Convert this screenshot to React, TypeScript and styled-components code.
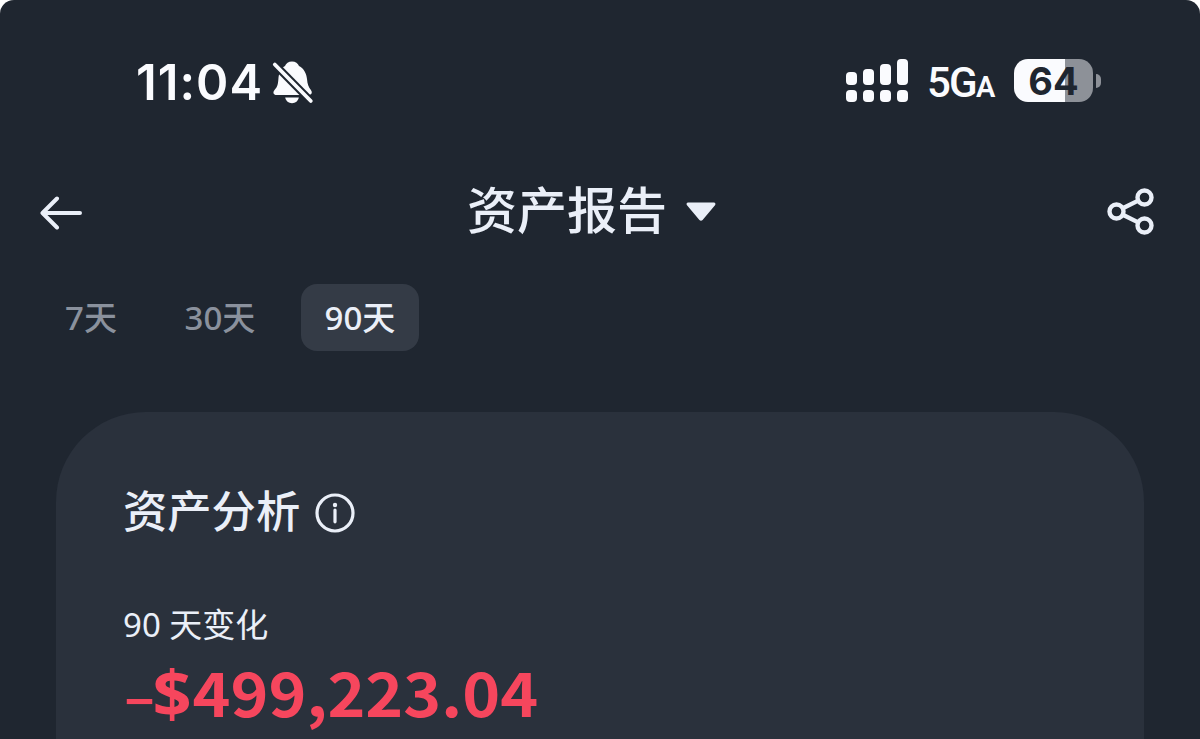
import React, { useState } from "react";
import styled, { createGlobalStyle } from "styled-components";

const colors = {
  background: "#1f2630",
  card: "#2a313c",
  tab: "#343b46",
  foreground: "#eaeff8",
  muted: "#8a919d",
  status: "#fafbfe",
  loss: "#f6465d",
};

const SIGNAL_BARS = [13, 16, 21, 26];

const TABS = [
  { label: "7天", days: 7, width: 96 },
  { label: "30天", days: 30, width: 118 },
  { label: "90天", days: 90, width: 118 },
];

export default function App() {
  const [days, setDays] = useState(90);

  return (
    <>
      <GlobalStyle />
      <Screen>
        <StatusBar>
          <StatusLeft>
            <Time>11:04</Time>
            <MutedBellIcon />
          </StatusLeft>
          <StatusRight>
            <Signal>
              {SIGNAL_BARS.map((height) => (
                <SignalColumn key={height}>
                  <SignalBar $height={height} />
                  <SignalBar $height={12} />
                </SignalColumn>
              ))}
            </Signal>
            <Network>
              5G<NetworkSuffix>A</NetworkSuffix>
            </Network>
            <Battery>
              <BatteryBody>64</BatteryBody>
              <BatteryTip />
            </Battery>
          </StatusRight>
        </StatusBar>

        <Header>
          <IconButton aria-label="返回">
            <BackIcon />
          </IconButton>
          <Title>
            <TitleText>资产报告</TitleText>
            <CaretIcon />
          </Title>
          <IconButton aria-label="分享">
            <ShareIcon />
          </IconButton>
        </Header>

        <Tabs>
          {TABS.map((tab) => (
            <Tab
              key={tab.days}
              $active={tab.days === days}
              $width={tab.width}
              onClick={() => setDays(tab.days)}
            >
              {tab.label}
            </Tab>
          ))}
        </Tabs>

        <Card>
          <CardTitle>
            <CardTitleText>资产分析</CardTitleText>
            <InfoIcon />
          </CardTitle>
          <ChangeLabel>90 天变化</ChangeLabel>
          <ChangeValue>
            <Minus>–</Minus>
            <Currency>$</Currency>499,223.04
          </ChangeValue>
        </Card>
      </Screen>
    </>
  );
}

const MutedBellIcon = () => (
  <svg width="42" height="44" viewBox="0 0 42 44" fill={colors.status}>
    <path d="M20 1.5C23.5 1.5 26 3.5 27 6C32 8.5 34.5 13.5 35 19C35.4 24 36.5 27 38.9 30C40.7 32.4 39.7 35 36.5 35H4.5C1.5 35 0.5 32.5 2.5 30C5.5 27 6 24 6.4 19C6.8 13.5 8.5 8.5 13 6C14 3.5 16.5 1.5 20 1.5Z" />
    <path d="M13.2 37.5H26.8C26.2 41 23.4 43.2 20 43.2C16.6 43.2 13.8 41 13.2 37.5Z" />
    <path d="M1 2.7L42 44.3" stroke={colors.background} strokeWidth="7.8" />
    <path
      d="M2.8 4.5L38.8 41"
      stroke={colors.status}
      strokeWidth="3.8"
      strokeLinecap="round"
    />
  </svg>
);

const BackIcon = () => (
  <svg
    width="44"
    height="36"
    viewBox="0 0 44 36"
    fill="none"
    stroke={colors.foreground}
    strokeWidth="4"
    strokeLinecap="round"
    strokeLinejoin="round"
  >
    <path d="M41 19H4M18 4.5L3.5 19L18 33.5" />
  </svg>
);

const CaretIcon = () => (
  <svg width="30" height="20" viewBox="0 0 30 20" fill={colors.foreground}>
    <path d="M2.2 0.5H27.8C29.4 0.5 30 2 29 3.2L16.6 18C15.7 19.1 14.3 19.1 13.4 18L1 3.2C0 2 0.6 0.5 2.2 0.5Z" />
  </svg>
);

const ShareIcon = () => (
  <svg
    width="48"
    height="48"
    viewBox="0 0 48 48"
    fill="none"
    stroke={colors.foreground}
    strokeWidth="4.4"
  >
    <circle cx="9.5" cy="23.5" r="7" />
    <circle cx="37.5" cy="9.5" r="7" />
    <circle cx="37.5" cy="37.5" r="7" />
    <path d="M15.8 20.3L31.2 12.6M15.8 26.7L31.2 34.4" />
  </svg>
);

const InfoIcon = () => (
  <svg
    width="40"
    height="40"
    viewBox="0 0 40 40"
    fill="none"
    stroke={colors.foreground}
    strokeWidth="3.2"
  >
    <circle cx="20" cy="20" r="18" />
    <path d="M20 17V28.8" strokeLinecap="round" />
    <circle cx="20" cy="12" r="2.2" fill={colors.foreground} stroke="none" />
  </svg>
);

const GlobalStyle = createGlobalStyle`
  body {
    margin: 0;
    background: #fff;
    font-family: "Noto Sans", "Noto Sans CJK SC", sans-serif;
    color: ${colors.foreground};
    overflow: hidden;
  }
`;

const Screen = styled.main`
  width: 1200px;
  height: 739px;
  box-sizing: border-box;
  display: flex;
  flex-direction: column;
  overflow: hidden;
  border-radius: 14px 14px 0 0;
  background: ${colors.background};
`;

const StatusBar = styled.div`
  display: flex;
  justify-content: space-between;
  align-items: center;
  height: 164px;
  flex-shrink: 0;
  box-sizing: border-box;
  padding: 0 99px 0 136px;
  color: ${colors.status};
`;

const StatusLeft = styled.div`
  display: flex;
  align-items: center;
`;

const Time = styled.span`
  width: 136px;
  padding-top: 2px;
  font-family: Inter, sans-serif;
  font-size: 49px;
  font-weight: 600;
  line-height: 60px;
  letter-spacing: 1px;
`;

const StatusRight = styled.div`
  display: flex;
  align-items: center;
`;

const Signal = styled.div`
  display: flex;
  align-items: flex-end;
  gap: 6px;
  height: 43px;
  margin-bottom: 3px;
`;

const SignalColumn = styled.div`
  display: flex;
  flex-direction: column;
  gap: 5px;
`;

const SignalBar = styled.div<{ $height: number }>`
  width: 11px;
  height: ${(props) => props.$height}px;
  border-radius: 4px;
  background: ${colors.status};
`;

const Network = styled.span`
  width: 68px;
  margin: 6px 0 0 19px;
  font-family: Roboto, sans-serif;
  font-size: 42px;
  font-weight: 500;
  line-height: 50px;
  letter-spacing: -1.8px;
  white-space: nowrap;
`;

const NetworkSuffix = styled.span`
  font-size: 29px;
  font-weight: 600;
`;

const Battery = styled.div`
  display: flex;
  align-items: center;
  gap: 3px;
  margin: -3px 0 0 19px;
`;

const BatteryBody = styled.div`
  width: 79px;
  height: 43px;
  border-radius: 14px;
  background: linear-gradient(to right, ${colors.status} 64%, #8d9198 64%);
  color: ${colors.background};
  font-family: Inter, sans-serif;
  font-size: 38px;
  font-weight: 700;
  line-height: 44px;
  text-align: center;
`;

const BatteryTip = styled.div`
  width: 5px;
  height: 14px;
  border-radius: 0 7px 7px 0;
  background: #8d9198;
`;

const Header = styled.header`
  display: flex;
  justify-content: space-between;
  align-items: center;
  height: 96px;
  flex-shrink: 0;
  padding: 0 45px 0 39px;
`;

const IconButton = styled.button`
  display: flex;
  padding: 0;
  border: none;
  background: none;
`;

const Title = styled.h1`
  display: flex;
  align-items: center;
  gap: 19px;
  margin: 0 7px 0 0;
  font-size: 50px;
  font-weight: 500;
  line-height: 70px;
`;

const TitleText = styled.span`
  padding-bottom: 4px;
`;

const Tabs = styled.nav`
  display: flex;
  gap: 22px;
  margin-top: 24px;
  padding-left: 43px;
`;

const Tab = styled.button<{ $active: boolean; $width: number }>`
  width: ${(props) => props.$width}px;
  height: 67px;
  padding: 0;
  border: none;
  border-radius: 16px;
  background: ${(props) => (props.$active ? colors.tab : "transparent")};
  color: ${(props) => (props.$active ? colors.foreground : colors.muted)};
  font-family: inherit;
  font-size: 33px;
  font-weight: 500;
  line-height: 66px;
`;

const Card = styled.section`
  flex: 1;
  margin: 61px 56px 0;
  padding: 69px 68px 0;
  border-radius: 90px 90px 0 0;
  background: ${colors.card};
`;

const CardTitle = styled.h2`
  display: flex;
  align-items: center;
  gap: 15px;
  margin: 0 0 0 -1px;
  font-size: 44.3px;
  font-weight: 500;
  line-height: 64px;
`;

const CardTitleText = styled.span`
  padding-bottom: 3px;
  line-height: 61px;
`;

const ChangeLabel = styled.div`
  margin: 56px 0 0 -1px;
  font-size: 33px;
  font-weight: 400;
  line-height: 48px;
`;

const ChangeValue = styled.div`
  display: flex;
  align-items: baseline;
  color: ${colors.loss};
  font-family: "Noto Sans CJK SC", sans-serif;
  font-size: 61px;
  font-weight: 700;
  line-height: 84px;
  transform: scaleX(1.055);
  transform-origin: left;
`;

const Minus = styled.span`
  width: 27px;
  font-size: 54px;
`;

const Currency = styled.span`
  width: 38px;
  font-family: "Noto Sans", sans-serif;
  font-size: 65px;
`;
